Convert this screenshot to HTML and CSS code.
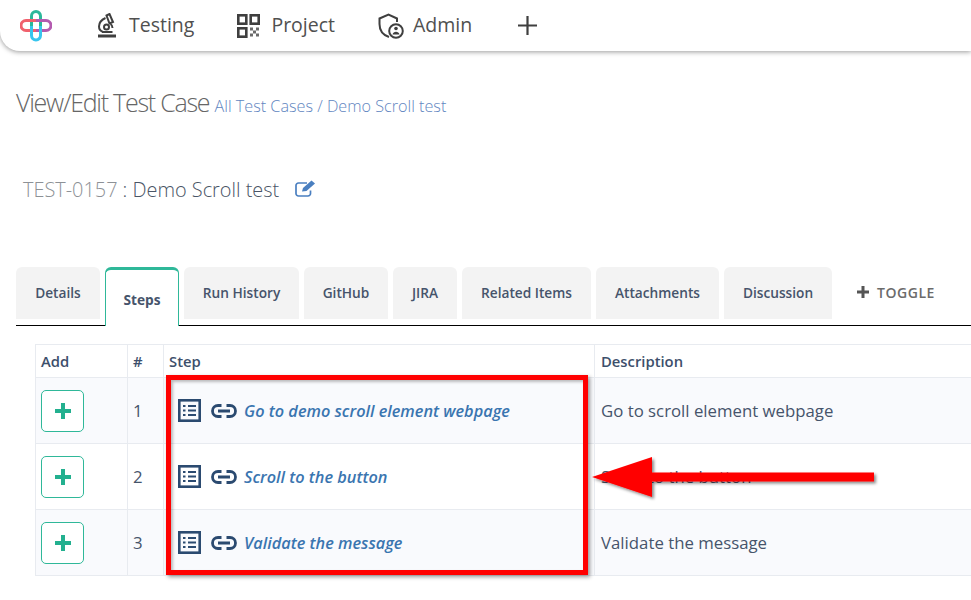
FILE: index.html
```html
<!DOCTYPE html>
<html lang="en">
<head>
<meta charset="utf-8">
<title>View/Edit Test Case</title>
<link rel="stylesheet" href="styles.css">
</head>
<body>
<header class="topbar">
  <svg class="logo" width="32" height="32" viewBox="0 0 32 32" fill="none" stroke-width="3">
    <path d="M11.500 16V6a4.500 4.500 0 0 1 9 0V16" stroke="#2cb89a"/>
    <path d="M16 10.500H6a5 5 0 0 0 0 10H16" stroke="#f0616d"/>
    <path d="M16 10.500H26a5 5 0 0 1 0 10H16" stroke="#b45bb0"/>
    <path d="M11.500 16V25.500a4.500 4.500 0 0 0 9 0V16" stroke="#37c5ee"/>
  </svg>
  <nav class="mainnav">
    <a class="navitem nav-testing">
      <svg width="20" height="25" viewBox="0 0 20 25" fill="none" stroke="#3f3f3f" stroke-width="2">
        <path d="M9.500 2.500l3-1.500 3.500 8-3.500 1.500z" />
        <path d="M8.500 5C4 7 2 10 2 13.500c0 2.500 1.500 4.500 4 5.500M13.500 11c1.500 1 2 2.500 2 4"/>
        <circle cx="9.500" cy="14" r="2.500"/>
        <path d="M1 23h18" stroke-width="3"/>
        <path d="M5 19h10.500" stroke-width="2"/>
      </svg>
      <span>Testing</span>
    </a>
    <a class="navitem nav-project">
      <svg width="23" height="24" viewBox="0 0 23 24" fill="none" stroke="#3f3f3f" stroke-width="2.600">
        <rect x="1.300" y="1.300" width="8" height="8.400"/>
        <rect x="13.700" y="1.300" width="8" height="8.400"/>
        <rect x="1.300" y="14.300" width="8" height="8.400"/>
        <path d="M13 13.500h3v3h-3zM19 13.500h3v3h-3zM16 16.500h3v3h-3zM13 19.500h3v3h-3zM19 19.500h3v3h-3z" fill="#6a6a6a" stroke="none"/>
      </svg>
      <span>Project</span>
    </a>
    <a class="navitem nav-admin">
      <svg width="26" height="26" viewBox="0 0 26 26" fill="none" stroke="#3f3f3f" stroke-width="2">
        <path d="M11 24C5 22 1.500 17 1.500 11V5.500L10.500 1.500 19 5.500V9"/>
        <circle cx="18" cy="18" r="6.800" fill="#fff" stroke-width="2"/>
        <circle cx="18" cy="15.500" r="1.800" fill="#3f3f3f" stroke="none"/>
        <path d="M14.500 21.500c.5-2 1.800-2.800 3.500-2.800s3 .8 3.500 2.800z" fill="#3f3f3f" stroke="none"/>
      </svg>
      <span>Admin</span>
    </a>
    <a class="navitem nav-plus">
      <svg width="19" height="19" viewBox="0 0 19 19" stroke="#3f3f3f" stroke-width="2.200"><path d="M9.500 0v19M0 9.500h19"/></svg>
    </a>
  </nav>
</header>

<main class="page">
  <h1 class="pagetitle">View/Edit Test Case <small class="crumbs">All Test Cases / Demo Scroll test</small></h1>

  <div class="casehead">
    <span class="caseid">TEST-0157</span> <span class="casename">: Demo Scroll test</span>
    <svg class="editicon" width="21" height="17" viewBox="0 0 21 17" fill="none" stroke="#4a7fc0" stroke-width="1.700">
      <path d="M15.500 10.500V13.500a2.500 2.500 0 0 1-2.500 2.500H3.500A2.500 2.500 0 0 1 1 13.500V5.500A2.500 2.500 0 0 1 3.500 3H12"/>
      <path d="M7 11.500l1-3.500L16.500 .5l3.500 3L11.500 11z" fill="#4a7fc0" stroke="none"/>
    </svg>
  </div>

  <div class="tabs">
    <a class="tab tab-details">Details</a>
    <a class="tab tab-active">Steps</a>
    <a class="tab tab-run">Run History</a>
    <a class="tab tab-github">GitHub</a>
    <a class="tab tab-jira">JIRA</a>
    <a class="tab tab-related">Related Items</a>
    <a class="tab tab-attach">Attachments</a>
    <a class="tab tab-disc">Discussion</a>
    <a class="toggle"><svg width="12" height="12" viewBox="0 0 12 12"><path d="M4.500 0h3v4.500H12v3H7.500V12h-3V7.500H0v-3h4.500z" fill="#555"/></svg>TOGGLE</a>
  </div>

  <table class="steps">
    <colgroup><col class="c-add"><col class="c-num"><col class="c-step"><col class="c-desc"></colgroup>
    <thead>
      <tr><th>Add</th><th>#</th><th>Step</th><th>Description</th></tr>
    </thead>
    <tbody>
      <tr class="odd">
        <td><button class="addbtn"><svg width="16" height="16" viewBox="0 0 16 16"><path d="M6 0h4v6h6v4h-6v6H6v-6H0V6h6z" fill="#23b08f"/></svg></button></td>
        <td>1</td>
        <td><div class="stepcell">
          <svg class="i-list" width="23" height="23" viewBox="0 0 23 23" fill="none" stroke="#2b4a70"><rect x="1.300" y="1.300" width="20.400" height="20.400" stroke-width="2.600"/><path d="M5 7h2.500M5 11.500h2.500M5 16h2.500M10 7h8M10 11.500h8M10 16h8" stroke-width="2.200"/></svg>
          <svg class="i-link" width="26" height="14" viewBox="0 0 26 14" fill="none" stroke="#2b4a70" stroke-width="2.800"><path d="M10.500 1.500H7a5.500 5.500 0 0 0 0 11h3.500M15.500 1.500H19a5.500 5.500 0 0 1 0 11h-3.500M7 7h12"/></svg>
          <a class="steplink">Go to demo scroll element webpage</a></div></td>
        <td>Go to scroll element webpage</td>
      </tr>
      <tr>
        <td><button class="addbtn"><svg width="16" height="16" viewBox="0 0 16 16"><path d="M6 0h4v6h6v4h-6v6H6v-6H0V6h6z" fill="#23b08f"/></svg></button></td>
        <td>2</td>
        <td><div class="stepcell">
          <svg class="i-list" width="23" height="23" viewBox="0 0 23 23" fill="none" stroke="#2b4a70"><rect x="1.300" y="1.300" width="20.400" height="20.400" stroke-width="2.600"/><path d="M5 7h2.500M5 11.500h2.500M5 16h2.500M10 7h8M10 11.500h8M10 16h8" stroke-width="2.200"/></svg>
          <svg class="i-link" width="26" height="14" viewBox="0 0 26 14" fill="none" stroke="#2b4a70" stroke-width="2.800"><path d="M10.500 1.500H7a5.500 5.500 0 0 0 0 11h3.500M15.500 1.500H19a5.500 5.500 0 0 1 0 11h-3.500M7 7h12"/></svg>
          <a class="steplink">Scroll to the button</a></div></td>
        <td>Scroll to the button</td>
      </tr>
      <tr class="odd">
        <td><button class="addbtn"><svg width="16" height="16" viewBox="0 0 16 16"><path d="M6 0h4v6h6v4h-6v6H6v-6H0V6h6z" fill="#23b08f"/></svg></button></td>
        <td>3</td>
        <td><div class="stepcell">
          <svg class="i-list" width="23" height="23" viewBox="0 0 23 23" fill="none" stroke="#2b4a70"><rect x="1.300" y="1.300" width="20.400" height="20.400" stroke-width="2.600"/><path d="M5 7h2.500M5 11.500h2.500M5 16h2.500M10 7h8M10 11.500h8M10 16h8" stroke-width="2.200"/></svg>
          <svg class="i-link" width="26" height="14" viewBox="0 0 26 14" fill="none" stroke="#2b4a70" stroke-width="2.800"><path d="M10.500 1.500H7a5.500 5.500 0 0 0 0 11h3.500M15.500 1.500H19a5.500 5.500 0 0 1 0 11h-3.500M7 7h12"/></svg>
          <a class="steplink">Validate the message</a></div></td>
        <td>Validate the message</td>
      </tr>
    </tbody>
  </table>
</main>

<div class="redbox"></div>
<svg class="redarrow" width="300" height="60" viewBox="0 0 300 60">
  <defs><filter id="sh" x="-10%" y="-30%" width="120%" height="160%"><feDropShadow dx="2" dy="2" stdDeviation="1.500" flood-color="#000" flood-opacity="0.45"/></filter></defs>
  <path d="M2 20L62 0V15.500H284V24.500H62V40z" fill="#ff0000" filter="url(#sh)"/>
</svg>
</body>
</html>
```
FILE: styles.css
```css
* { box-sizing: border-box; }
html, body { margin: 0; padding: 0; background: #fff; }
body {
  width: 971px;
  height: 600px;
  overflow: hidden;
  position: relative;
  font-family: "Open Sans", "Liberation Sans", sans-serif;
  color: #3d4f6b;
}
.topbar {
  height: 51px;
  display: flex;
  align-items: center;
  padding-left: 20px;
  background: #fff;
  border-bottom-left-radius: 20px;
  box-shadow: 0 1px 5px rgba(0, 0, 0, .4);
}
.logo { flex: none; }
.mainnav { display: flex; align-items: center; margin-left: 45px; }
.navitem {
  display: flex;
  align-items: center;
  gap: 12px;
  font-size: 19.500px;
  color: #505050;
}
.navitem span { margin-top: -2px; }
.nav-project { margin-left: 43px; gap: 11px; }
.nav-admin { margin-left: 43px; gap: 9px; }
.nav-plus { margin-left: 46px; }
.page { padding: 0 0 0 16px; }
.pagetitle {
  margin: 35px 0 0;
  font-size: 25px;
  font-weight: 300;
  line-height: 33px;
  letter-spacing: -1.250px;
  color: #666;
}
.crumbs { font-size: 16.200px; font-weight: 300; letter-spacing: 0; color: #5f86bf; }
.casehead {
  margin: 53px 0 0 7px;
  display: flex;
  align-items: center;
  height: 26px;
  font-size: 19.900px;
  font-weight: 300;
  white-space: pre;
}
.caseid { color: #8d9196; }
.casename { color: #4a5566; margin-left: 5px; }
.editicon { margin-left: 16px; margin-top: -2px; }
.tabs {
  margin-top: 65px;
  height: 59px;
  width: 955px;
  display: flex;
  align-items: flex-start;
  gap: 5px;
  border-bottom: 1px solid #000;
}
.tab {
  height: 52px;
  padding-bottom: 1px;
  display: flex;
  align-items: center;
  justify-content: center;
  background: #f3f3f3;
  border-radius: 6px 6px 0 0;
  font-size: 13.700px;
  font-weight: 600;
  color: #46546b;
}
.tab-details { width: 84px; }
.tab-active {
  width: 74px;
  height: 59px;
  padding: 2px 0 0;
  background: #fff;
  border: 1px solid #2fb899;
  border-top: 3px solid #2fb899;
  border-bottom: 0;
  font-weight: 700;
}
.tab-run { width: 115px; }
.tab-github { width: 84px; }
.tab-jira { width: 64px; }
.tab-related { width: 129px; }
.tab-attach { width: 123px; }
.tab-disc { width: 108px; }
.toggle {
  margin-left: 20px;
  height: 50px;
  display: flex;
  align-items: center;
  gap: 8px;
  font-size: 14px;
  font-weight: 600;
  letter-spacing: .55px;
  color: #6b6b6b;
}
.steps {
  margin: 18px 0 0 19px;
  width: 960px;
  table-layout: fixed;
  border-collapse: collapse;
  font-size: 16.800px;
  color: #46546b;
}
.c-add { width: 92px; }
.c-num { width: 36px; }
.c-step { width: 431px; }
.c-desc { width: 401px; }
.steps th, .steps td {
  border: 1px solid #e8ebf0;
  padding: 0 5px;
  text-align: left;
}
.steps th:last-child, .steps td:last-child { padding-left: 6px; }
.steps th { height: 33px; font-size: 14.800px; font-weight: 600; color: #3d4f6b; padding-bottom: 1px; }
.steps td { height: 66px; }
.steps tr.odd td { background: #f9fafd; }
.addbtn {
  width: 43px;
  height: 42px;
  padding: 0;
  display: flex;
  align-items: center;
  justify-content: center;
  background: #fff;
  border: 1px solid #2fb899;
  border-radius: 5px;
}
.stepcell { display: flex; align-items: center; margin-left: 9px; }
.i-link { margin-left: 10px; }
.steplink {
  margin-left: 7px;
  font-size: 16.300px;
  font-weight: 600;
  font-style: italic;
  color: #3a75b0;
}
.redbox {
  position: absolute;
  left: 166px;
  top: 375px;
  width: 422px;
  height: 200px;
  border: 5px solid #ff0000;
  box-shadow: 2px 2px 4px rgba(0, 0, 0, .4), inset 2px 2px 3px rgba(0, 0, 0, .25);
}
.redarrow { position: absolute; left: 590px; top: 457px; overflow: visible; }
```
